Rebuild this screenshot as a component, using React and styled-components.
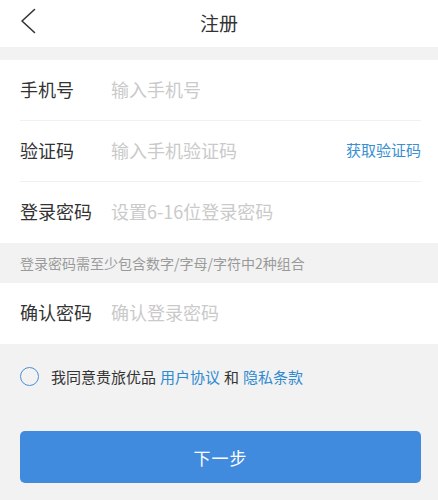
import React, { useState } from "react";
import styled, { createGlobalStyle } from "styled-components";

const GlobalStyle = createGlobalStyle`
  html, body {
    margin: 0;
    padding: 0;
    background: #f2f2f2;
    font-family: "Noto Sans CJK SC", "Noto Sans", sans-serif;
  }
  * { box-sizing: border-box; }
`;

const Page = styled.div`
  width: 438px;
  min-height: 500px;
  background: #f2f2f2;
`;

const Header = styled.div`
  position: relative;
  height: 47px;
  background: #fff;
  display: flex;
  align-items: center;
  justify-content: center;
  margin-bottom: 13px;
`;

const BackBtn = styled.div`
  position: absolute;
  left: 20px;
  top: 7px;
  width: 20px;
  height: 28px;
  display: flex;
  align-items: center;
`;

const Title = styled.h1`
  margin: 0;
  font-size: 19px;
  font-weight: 400;
  color: #333;
  line-height: 1;
  margin-top: -2px;
`;

const Section = styled.div`
  background: #fff;
  padding: 0 17px 0 20px;
`;

const Row = styled.div`
  height: 61px;
  display: flex;
  align-items: center;
  padding-bottom: 3px;
  border-bottom: ${(p) => (p.last ? "none" : "1px solid #f0f0f0")};
`;

const Label = styled.span`
  width: 91px;
  flex-shrink: 0;
  font-size: 18px;
  color: #333;
`;

const Input = styled.input`
  flex: 1;
  min-width: 0;
  border: none;
  outline: none;
  background: transparent;
  font-family: inherit;
  font-size: 18px;
  color: #333;
  padding: 0;
  &::placeholder {
    color: #cacaca;
  }
`;

const CodeLink = styled.span`
  font-size: 15px;
  color: #3a8fd0;
  flex-shrink: 0;
`;

const Hint = styled.div`
  height: 40px;
  display: flex;
  align-items: center;
  padding-left: 20px;
  font-size: 14px;
  color: #9a9a9a;
`;

const Agree = styled.div`
  display: flex;
  align-items: flex-start;
  padding: 22px 20px 0;
  height: 87px;
  font-size: 15px;
  color: #333;
`;

const AgreeInner = styled.label`
  display: flex;
  align-items: center;
  height: 20px;
`;

const Radio = styled.span`
  width: 19px;
  height: 19px;
  border-radius: 50%;
  border: 1.6px solid #4a90d4;
  background: ${(p) => (p.checked ? "#418bdf" : "transparent")};
  margin-right: 12px;
`;

const Link = styled.span`
  color: #2f8ad0;
  margin: 0 4px;
`;

const NextButton = styled.button`
  display: block;
  margin: 0 17px 0 20px;
  width: 401px;
  height: 52px;
  border: none;
  border-radius: 5px;
  background: #418bdf;
  color: #fff;
  font-family: inherit;
  font-size: 17px;
  letter-spacing: 1px;
`;

export default function App() {
  const [agreed, setAgreed] = useState(false);
  return (
    <Page>
      <GlobalStyle />
      <Header>
        <BackBtn>
          <svg width="16" height="26" viewBox="0 0 16 26" fill="none">
            <path d="M14.5 1.5 L2 13 L14.5 24.5" stroke="#333" strokeWidth="1.6" strokeLinecap="round" strokeLinejoin="round" />
          </svg>
        </BackBtn>
        <Title>注册</Title>
      </Header>
      <Section>
        <Row>
          <Label>手机号</Label>
          <Input placeholder="输入手机号" />
        </Row>
        <Row>
          <Label>验证码</Label>
          <Input placeholder="输入手机验证码" />
          <CodeLink>获取验证码</CodeLink>
        </Row>
        <Row last>
          <Label>登录密码</Label>
          <Input type="password" placeholder="设置6-16位登录密码" />
        </Row>
      </Section>
      <Hint>登录密码需至少包含数字/字母/字符中2种组合</Hint>
      <Section>
        <Row last>
          <Label>确认密码</Label>
          <Input type="password" placeholder="确认登录密码" />
        </Row>
      </Section>
      <Agree>
        <AgreeInner onClick={() => setAgreed(!agreed)}>
          <Radio checked={agreed} />
          我同意贵旅优品
          <Link>用户协议</Link>和<Link>隐私条款</Link>
        </AgreeInner>
      </Agree>
      <NextButton>下一步</NextButton>
    </Page>
  );
}
